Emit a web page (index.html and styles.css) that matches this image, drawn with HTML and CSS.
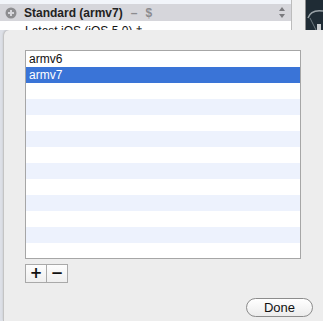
FILE: index.html
```html
<!DOCTYPE html>
<html lang="en">
<head>
    <meta charset="UTF-8">
    <title>Architectures</title>
    <link rel="stylesheet" href="styles.css">
</head>
<body>
    <div class="backdrop">
        <div class="settings">
            <div class="strip"></div>
            <div class="group-row">
                <svg class="disclosure" width="12" height="12" viewBox="0 0 12 12">
                    <circle cx="6" cy="6" r="5.5" fill="#8d8d90"/>
                    <path d="M6 3v6M3 6h6" stroke="#d6d6db" stroke-width="2"/>
                </svg>
                <span class="group-title">Standard (armv7)</span>
                <span class="group-meta">–</span>
                <span class="group-meta">$</span>
                <svg class="stepper" width="6" height="11" viewBox="0 0 6 11">
                    <path d="M3 0L6 4H0z M3 11L0 7H6z" fill="#7a7a7e"/>
                </svg>
            </div>
            <div class="sub-row">Latest iOS (iOS 5.0) ‡</div>
        </div>
        <div class="gutter"></div>
        <div class="desktop">
            <svg width="17" height="30" viewBox="0 0 17 30">
                <path d="M2 18 C4 12 10 10 17 11" stroke="#9aa3a8" stroke-width="1.5" fill="none"/>
                <path d="M4 18 L10 30" stroke="#6f7a80" stroke-width="1" fill="none"/>
                <rect x="11" y="24" width="4" height="6" fill="#c9cdd0"/>
            </svg>
        </div>
    </div>

    <div class="sheet">
        <div class="table">
            <div class="row">armv6</div>
            <div class="row selected">armv7</div>
            <div class="row"></div>
            <div class="row"></div>
            <div class="row"></div>
            <div class="row"></div>
            <div class="row"></div>
            <div class="row"></div>
            <div class="row"></div>
            <div class="row"></div>
            <div class="row"></div>
            <div class="row"></div>
            <div class="row"></div>
        </div>
        <div class="controls">
            <button class="square">+</button>
            <button class="square">−</button>
        </div>
        <div class="footer">
            <button class="done">Done</button>
        </div>
    </div>
</body>
</html>
```

FILE: styles.css
```css
body {
    margin: 0;
    width: 323px;
    height: 321px;
    overflow: hidden;
    background: #dde0e7;
    font-family: 'Liberation Sans', Arial, sans-serif;
    color: #111;
}
.backdrop {
    display: flex;
    height: 30px;
    overflow: hidden;
}
.settings {
    width: 292px;
    background: #fff;
    border-right: 1px solid #bcbcbc;
}
.strip {
    height: 4px;
    background: #f2f5fa;
}
.group-row {
    display: flex;
    align-items: center;
    height: 17px;
    background: #d6d6db;
    font-size: 12px;
}
.disclosure {
    margin: 0 7px 0 5px;
}
.group-title {
    font-weight: bold;
    color: #222;
}
.group-meta {
    color: #8b8b8f;
    font-weight: bold;
    margin-left: 8px;
}
.stepper {
    margin-left: auto;
    margin-right: 6px;
}
.sub-row {
    padding: 3px 0 0 25px;
    font-size: 12px;
    line-height: 14px;
}
.gutter {
    width: 13px;
    background: #efefef;
    border-right: 1px solid #8e8e8e;
}
.desktop {
    flex: 1;
    background: #1f2c35;
}
.desktop svg {
    display: block;
}
.sheet {
    margin-left: 3px;
    height: 291px;
    background: #ededed;
    border-top-left-radius: 6px;
    border-left: 1px solid #c4c4c4;
    box-shadow: 0 -1px 2px rgba(0, 0, 0, 0.15);
    padding: 20px 0 0 21px;
    box-sizing: border-box;
}
.table {
    width: 274px;
    height: 207px;
    overflow: hidden;
    border: 1px solid #a6a6a6;
    background: #fff;
}
.row {
    height: 16px;
    line-height: 16px;
    padding-left: 3px;
    font-size: 12px;
}
.row:nth-child(even) {
    background: #edf2fd;
}
.row.selected {
    background: #3a74d7;
    color: #fff;
}
.controls {
    display: flex;
    margin-top: 5px;
}
.square {
    width: 22px;
    height: 19px;
    padding: 0;
    border: 1px solid #a9a9a9;
    background: linear-gradient(#fdfdfd, #efefef);
    font-family: 'DejaVu Sans', sans-serif;
    font-size: 15px;
    font-weight: bold;
    line-height: 15px;
    color: #111;
}
.square + .square {
    border-left: none;
    width: 21px;
}
.footer {
    display: flex;
    justify-content: flex-end;
    margin-top: 15px;
    padding-right: 10px;
}
.done {
    width: 67px;
    height: 19px;
    padding: 0;
    border: 1px solid #8c8c8c;
    border-radius: 10px;
    background: linear-gradient(#ffffff, #ececec);
    font-family: 'Liberation Sans', Arial, sans-serif;
    font-size: 13px;
    color: #111;
}
```
